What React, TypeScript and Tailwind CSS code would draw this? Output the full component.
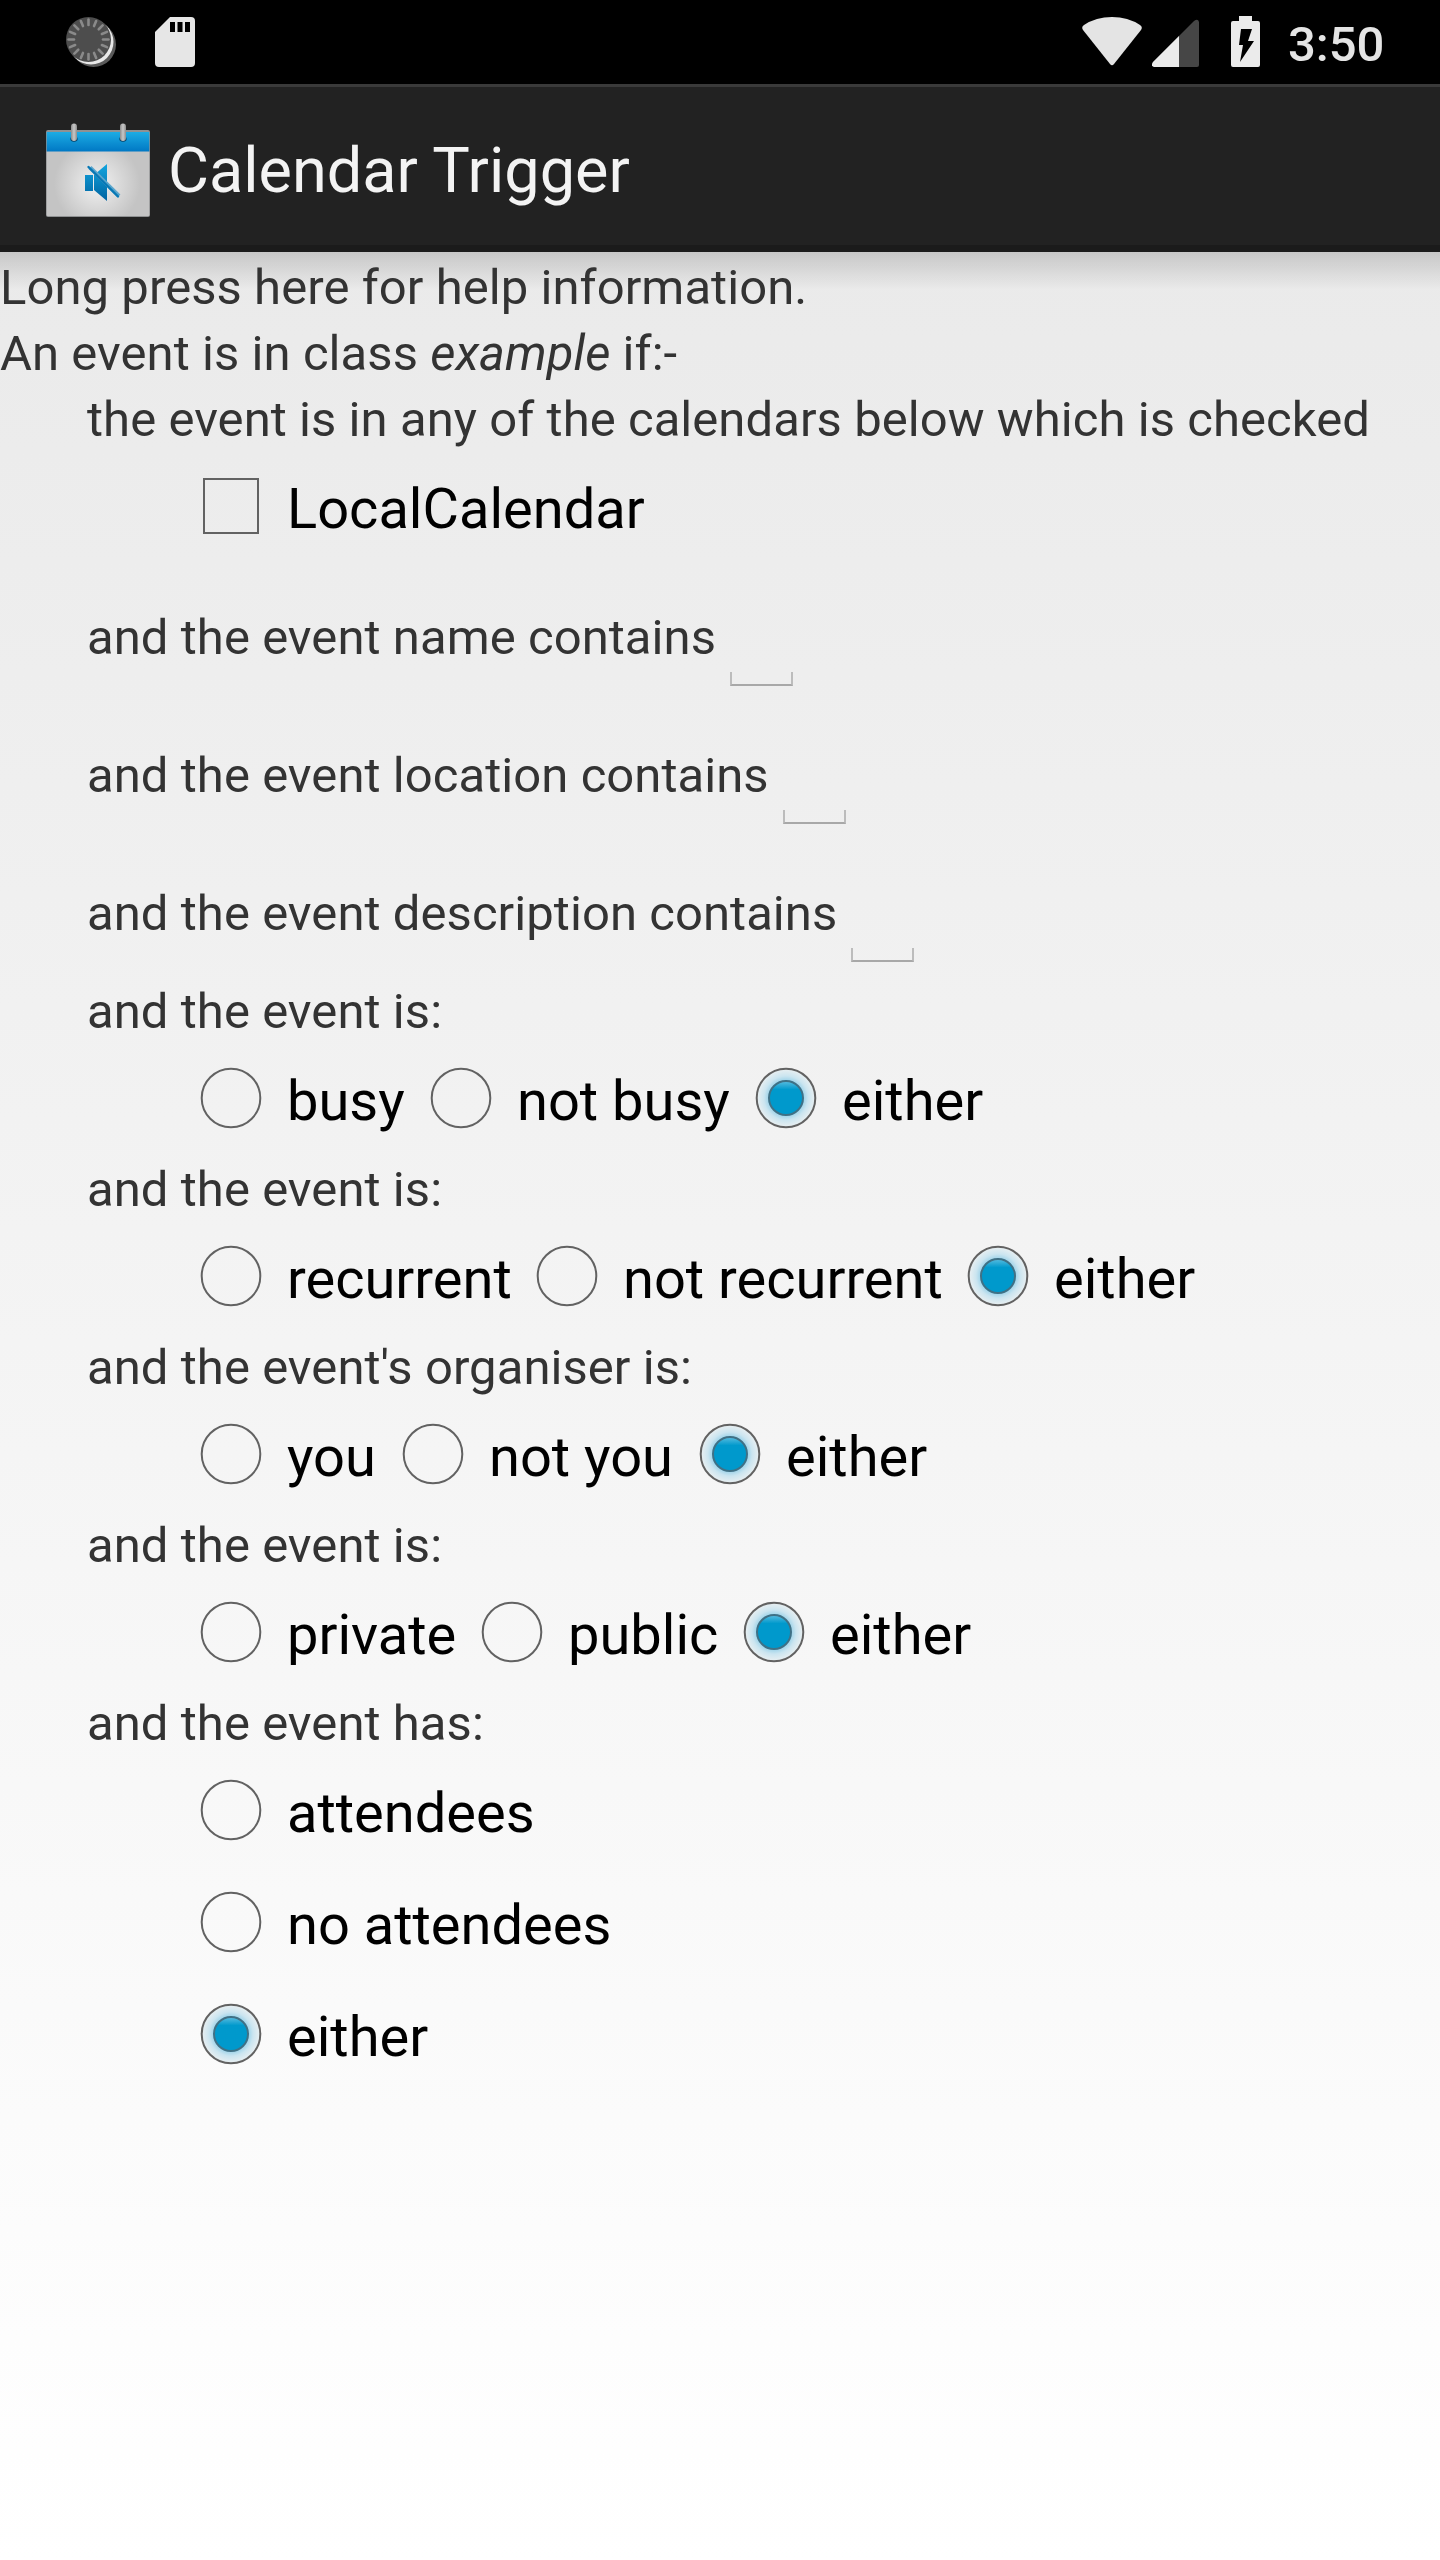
import { Fragment } from "react";

function Radio({ checked = false, label, width }: { checked?: boolean; label: string; width?: number }) {
  return (
    <label className="flex h-28 items-center">
      <svg className="h-28 w-28 shrink-0" viewBox="0 0 112 112">
        {checked && <circle cx="56" cy="56" r="29" fill="url(#halo)" />}
        <circle cx="56" cy="56" r="29.3" fill="none" stroke="#626262" strokeWidth="2" />
        {checked && <circle cx="56" cy="56" r="17" fill="url(#dot)" stroke="#3f7186" strokeWidth="2" />}
      </svg>
      <span className="pt-[6px] text-[56px] leading-[76px] text-black" style={{ width }}>
        {label}
      </span>
    </label>
  );
}

function Line({ children, indent = true }: { children: React.ReactNode; indent?: boolean }) {
  return (
    <p
      className={
        indent
          ? "h-[66px] pl-[87px] text-[49px] leading-[71px] tracking-[0.06px]"
          : "h-[66px] text-[49px] leading-[71px] tracking-[0.06px]"
      }
    >
      {children}
    </p>
  );
}

function ContainsField({ label }: { label: string }) {
  return (
    <div className="flex h-[138px] items-end pl-[87px]">
      <span className="pb-[27px] text-[49px] leading-[71px] tracking-[0.06px]">{label}</span>
      <span className="mb-[14px] ml-[14px] block h-[14px] w-[63px] border-2 border-t-0 border-x-[#bcbcbc] border-b-[#a8a8a8]" />
    </div>
  );
}

const groups: { title: string; options: [string, number?][] }[] = [
  { title: "and the event is:", options: [["busy", 118], ["not busy", 213], ["either"]] },
  { title: "and the event is:", options: [["recurrent", 224], ["not recurrent", 319], ["either"]] },
  { title: "and the event's organiser is:", options: [["you", 90], ["not you", 185], ["either"]] },
  { title: "and the event is:", options: [["private", 169], ["public", 150], ["either"]] },
];

function StatusBar() {
  return (
    <header className="flex h-[84px] items-center bg-black">
      <svg className="ml-[64px] h-[84px] w-[54px]" viewBox="64 0 54 84">
        <circle cx="93.5" cy="44.5" r="22.5" fill="#5a5a5a" />
        <circle cx="91" cy="42" r="22.5" fill="#e8e8e8" />
        <circle cx="88.5" cy="39.5" r="22.5" fill="#4d4d4d" />
        <g stroke="#8a8a8a" strokeWidth="2.6" strokeLinecap="round">
          {Array.from({ length: 16 }, (_, i) => (
            <line key={i} x1="88.5" y1="19.5" x2="88.5" y2="25" transform={`rotate(${i * 22.5} 88.5 39.5)`} />
          ))}
        </g>
      </svg>
      <svg className="ml-[37px] h-[84px] w-[40px]" viewBox="155 0 40 84">
        <path d="M170 17H191Q195 17 195 21V63Q195 67 191 67H159Q155 67 155 63V32Z" fill="#e6e6e6" />
        <path d="M170 22h5v10h-5zM177.5 22h5v10h-5zM185 22h5v10h-5z" fill="#000" />
      </svg>
      <svg className="ml-auto h-[84px] w-[60px]" viewBox="1082 0 60 84">
        <path d="M1083 30Q1081 27 1084 25Q1096 17 1112 17Q1128 17 1140 25Q1143 27 1141 30L1114 64Q1112 66.5 1110 64Z" fill="#e4e4e4" />
      </svg>
      <svg className="ml-[10px] h-[84px] w-[47px]" viewBox="1152 0 47 84">
        <path d="M1154 67Q1150.5 66 1153 62L1194 21Q1198 18 1199 22V65Q1199 67 1197 67Z" fill="#464646" />
        <path d="M1154 67Q1150.5 66 1153 62L1179 36V67Z" fill="#ebebeb" />
      </svg>
      <svg className="ml-[32px] h-[84px] w-[29px]" viewBox="1231 0 29 84">
        <path d="M1239 16h13v5h6q2 0 2 2v42q0 2-2 2h-25q-2 0-2-2V23q0-2 2-2h6Z" fill="#ebebeb" />
        <path d="M1241 29h11l-4 12h6L1240 62l3-17h-4Z" fill="#000" />
      </svg>
      <span className="mt-[11px] mr-[55px] ml-[27px] w-[98px] self-start pl-[1px] text-[49px] leading-[67px] font-medium text-[#e4e4e4]">
        3:50
      </span>
    </header>
  );
}

function CalendarIcon() {
  return (
    <svg className="mt-[25px] h-[112px] w-[112px]" viewBox="42 112 112 112">
      <defs>
        <radialGradient id="page" gradientUnits="userSpaceOnUse" cx="97" cy="184" r="43">
          <stop offset="0" stopColor="#f2f2f2" />
          <stop offset="1" stopColor="#c4c4c4" />
        </radialGradient>
        <linearGradient id="band" x1="0" y1="0" x2="0" y2="1">
          <stop offset="0" stopColor="#1cace4" />
          <stop offset="1" stopColor="#0078c4" />
        </linearGradient>
        <linearGradient id="speaker" gradientUnits="userSpaceOnUse" x1="0" y1="164" x2="0" y2="201">
          <stop offset="0" stopColor="#12a5df" />
          <stop offset="1" stopColor="#0063a0" />
        </linearGradient>
        <linearGradient id="ring" x1="0" y1="0" x2="1" y2="0">
          <stop offset="0" stopColor="#8d8d8d" />
          <stop offset="0.5" stopColor="#c8c8c8" />
          <stop offset="1" stopColor="#8d8d8d" />
        </linearGradient>
      </defs>
      <rect x="46" y="130" width="104" height="87" rx="2" fill="#8f9192" />
      <rect x="46.7" y="151" width="102.6" height="65" rx="1" fill="url(#page)" />
      <rect x="46.7" y="132" width="102.6" height="19.5" fill="url(#band)" />
      <ellipse cx="74" cy="139" rx="3.6" ry="2.8" fill="#053e63" />
      <ellipse cx="123" cy="139" rx="3.6" ry="2.8" fill="#053e63" />
      <rect x="71" y="123.5" width="6" height="17.5" rx="3" fill="url(#ring)" />
      <rect x="120" y="123.5" width="6" height="17.5" rx="3" fill="url(#ring)" />
      <path d="M85 175h8v16h-8zM94 175l13-11v37l-13-11Z" fill="url(#speaker)" />
      <path d="M90 167.5L119 196" stroke="#5aa6cd" strokeWidth="4" />
      <path d="M88.5 167L118 196.5" stroke="#0878b5" strokeWidth="2.4" strokeLinecap="round" />
    </svg>
  );
}

export default function App() {
  return (
    <div className="flex h-[2560px] w-[1440px] flex-col overflow-hidden bg-linear-to-b from-[#e8e8e8] to-white font-[Roboto,sans-serif] whitespace-nowrap text-[#333333]">
      <svg className="absolute h-0 w-0">
        <defs>
          <radialGradient id="halo">
            <stop offset="0.55" stopColor="#92cee7" />
            <stop offset="0.76" stopColor="#cbe5f0" />
            <stop offset="1" stopColor="#e9eff1" />
          </radialGradient>
          <linearGradient id="dot" x1="0" y1="0" x2="0" y2="1">
            <stop offset="0" stopColor="#5bbde0" />
            <stop offset="0.25" stopColor="#0099cc" />
            <stop offset="1" stopColor="#0099cc" />
          </linearGradient>
        </defs>
      </svg>
      <StatusBar />
      <div className="flex h-[168px] shrink-0 items-start border-t-[3px] border-b-[7px] border-t-[#3a3a3a] border-b-[#1b1b1b] bg-[#222222] pl-[42px]">
        <CalendarIcon />
        <h1 className="mt-[42px] ml-[14px] text-[63px] leading-[83px] text-[#f3f3f3]">Calendar Trigger</h1>
      </div>
      <main className="flex-1 bg-linear-to-b from-black/15 to-transparent bg-[length:100%_38px] bg-no-repeat">
        <Line indent={false}>Long press here for help information.</Line>
        <Line indent={false}>
          An event is in class <em>example</em> if:-
        </Line>
        <Line>the event is in any of the calendars below which is checked</Line>
        <label className="flex h-28 items-center pl-[175px]">
          <span className="mx-[28px] size-[56px] border-2 border-[#626262]" />
          <span className="pt-[6px] text-[56px] leading-[76px] text-black">LocalCalendar</span>
        </label>
        <ContainsField label="and the event name contains" />
        <ContainsField label="and the event location contains" />
        <ContainsField label="and the event description contains" />
        {groups.map((group, i) => (
          <Fragment key={i}>
            <Line>{group.title}</Line>
            <div className="flex pl-[175px]">
              {group.options.map(([option, width]) => (
                <Radio key={option} label={option} width={width} checked={option === "either"} />
              ))}
            </div>
          </Fragment>
        ))}
        <Line>and the event has:</Line>
        <div className="flex flex-col pl-[175px]">
          <Radio label="attendees" />
          <Radio label="no attendees" />
          <Radio label="either" checked />
        </div>
      </main>
    </div>
  );
}
